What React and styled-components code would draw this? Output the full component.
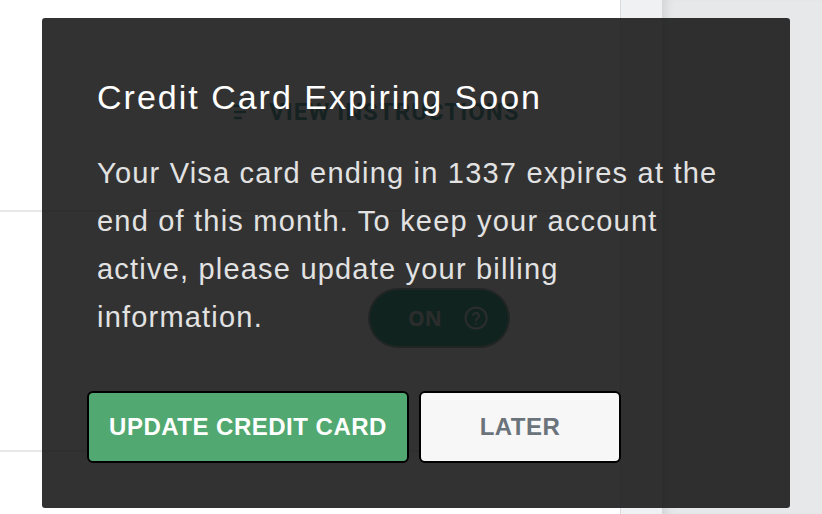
import React from 'react'
import styled, {createGlobalStyle} from 'styled-components'

const GlobalStyle = createGlobalStyle`
  html, body {
    margin: 0;
    padding: 0;
    overflow: hidden;
  }
  body {
    font-family: "Liberation Sans", Arial, sans-serif;
    background: #e7e8ea;
  }
`

const Page = styled.div`
  position: relative;
  display: flex;
  width: 822px;
  height: 514px;
`

const Main = styled.div`
  flex: none;
  width: 620px;
  background: #fff;
  border-right: 1px solid #d9dbde;
  display: flex;
  flex-direction: column;
`

const Section = styled.div`
  flex: ${({grow}) => (grow ? '1' : 'none')};
  height: ${({h}) => (h ? `${h}px` : 'auto')};
  box-sizing: border-box;
  border-bottom: ${({last}) => (last ? '0' : '2px solid #e6e8e9')};
  padding: ${({pad}) => pad || '0'};
`

const Gutter = styled.div`
  flex: none;
  width: 41px;
  background: #eff1f3;
`

const Side = styled.div`
  flex: 1;
  background: #e7e8ea;
  box-shadow: inset 10px 0 12px -8px rgba(0, 0, 0, 0.12);
`

const InstructionsLink = styled.a`
  display: inline-flex;
  align-items: center;
  gap: 18px;
  color: #2e8a86;
  font-family: "Liberation Sans Narrow", Roboto, sans-serif;
  font-weight: 700;
  font-size: 24px;
  letter-spacing: 1px;
  text-transform: uppercase;
  text-decoration: none;

  svg {
    width: 18px;
    height: 18px;
  }
`

const Toggle = styled.div`
  display: inline-flex;
  align-items: center;
  gap: 22px;
  box-sizing: border-box;
  width: 138px;
  height: 56px;
  padding: 0 20px 0 38px;
  border-radius: 28px;
  background: #00926e;
  box-shadow: 0 0 0 2px rgba(0, 60, 40, 0.5);
  color: #c9d6cf;
  font-family: "Open Sans", sans-serif;
  font-weight: 700;
  font-size: 21px;

  svg {
    width: 26px;
    height: 26px;
  }
`

const Popover = styled.div`
  position: absolute;
  left: 42px;
  top: 18px;
  width: 748px;
  height: 490px;
  box-sizing: border-box;
  padding: 60px 45px 45px;
  border-radius: 3px;
  background: rgba(18, 18, 18, 0.865);
  display: flex;
  flex-direction: column;
`

const Title = styled.h2`
  margin: 0;
  padding: 0 10px;
  color: #fff;
  font-size: 34px;
  font-weight: 400;
  line-height: 38px;
  letter-spacing: 2px;
`

const Message = styled.p`
  margin: 33px 0 0;
  padding: 0 20px 0 10px;
  color: #e2e2e2;
  font-size: 29px;
  line-height: 48px;
  letter-spacing: 1.2px;
`

const Actions = styled.div`
  margin-top: auto;
  display: flex;
  gap: 10px;
`

const Button = styled.button`
  box-sizing: border-box;
  width: ${({w}) => w}px;
  height: 72px;
  padding: 0;
  border: 2px solid #000;
  border-radius: 6px;
  background: ${({primary}) => (primary ? '#51a870' : '#f7f7f7')};
  color: ${({primary}) => (primary ? '#fff' : '#6b737b')};
  font-family: "Liberation Sans", Arial, sans-serif;
  font-size: 24px;
  font-weight: 700;
  letter-spacing: 0.5px;
  text-transform: uppercase;
  cursor: pointer;
`

const ListIcon = () => (
  <svg viewBox="0 0 18 18" fill="none" stroke="currentColor" strokeWidth="2.4" strokeLinecap="round">
    <path d="M2 3h14M2 9h10M2 15h6" />
  </svg>
)

const HelpIcon = () => (
  <svg viewBox="0 0 24 24" fill="none" stroke="currentColor" strokeWidth="2" strokeLinecap="round" strokeLinejoin="round">
    <circle cx="12" cy="12" r="10.5" />
    <path d="M9.1 9a3 3 0 0 1 5.8 1c0 2-3 2.6-3 4.2" />
    <path d="M12 17.6h.01" />
  </svg>
)

export default function App() {
  return (
    <>
      <GlobalStyle />
      <Page>
        <Main>
          <Section h={212} pad="98px 0 0 233px">
            <InstructionsLink href="#">
              <ListIcon />
              View instructions
            </InstructionsLink>
          </Section>
          <Section h={240} pad="78px 0 0 370px">
            <Toggle>
              ON
              <HelpIcon />
            </Toggle>
          </Section>
          <Section grow last />
        </Main>
        <Gutter />
        <Side />

        <Popover role="dialog">
          <Title>Credit Card Expiring Soon</Title>
          <Message>
            Your Visa card ending in 1337 expires at the end of this month. To keep your
            account active, please update your billing information.
          </Message>
          <Actions>
            <Button primary w={322}>Update credit card</Button>
            <Button w={202}>Later</Button>
          </Actions>
        </Popover>
      </Page>
    </>
  )
}
